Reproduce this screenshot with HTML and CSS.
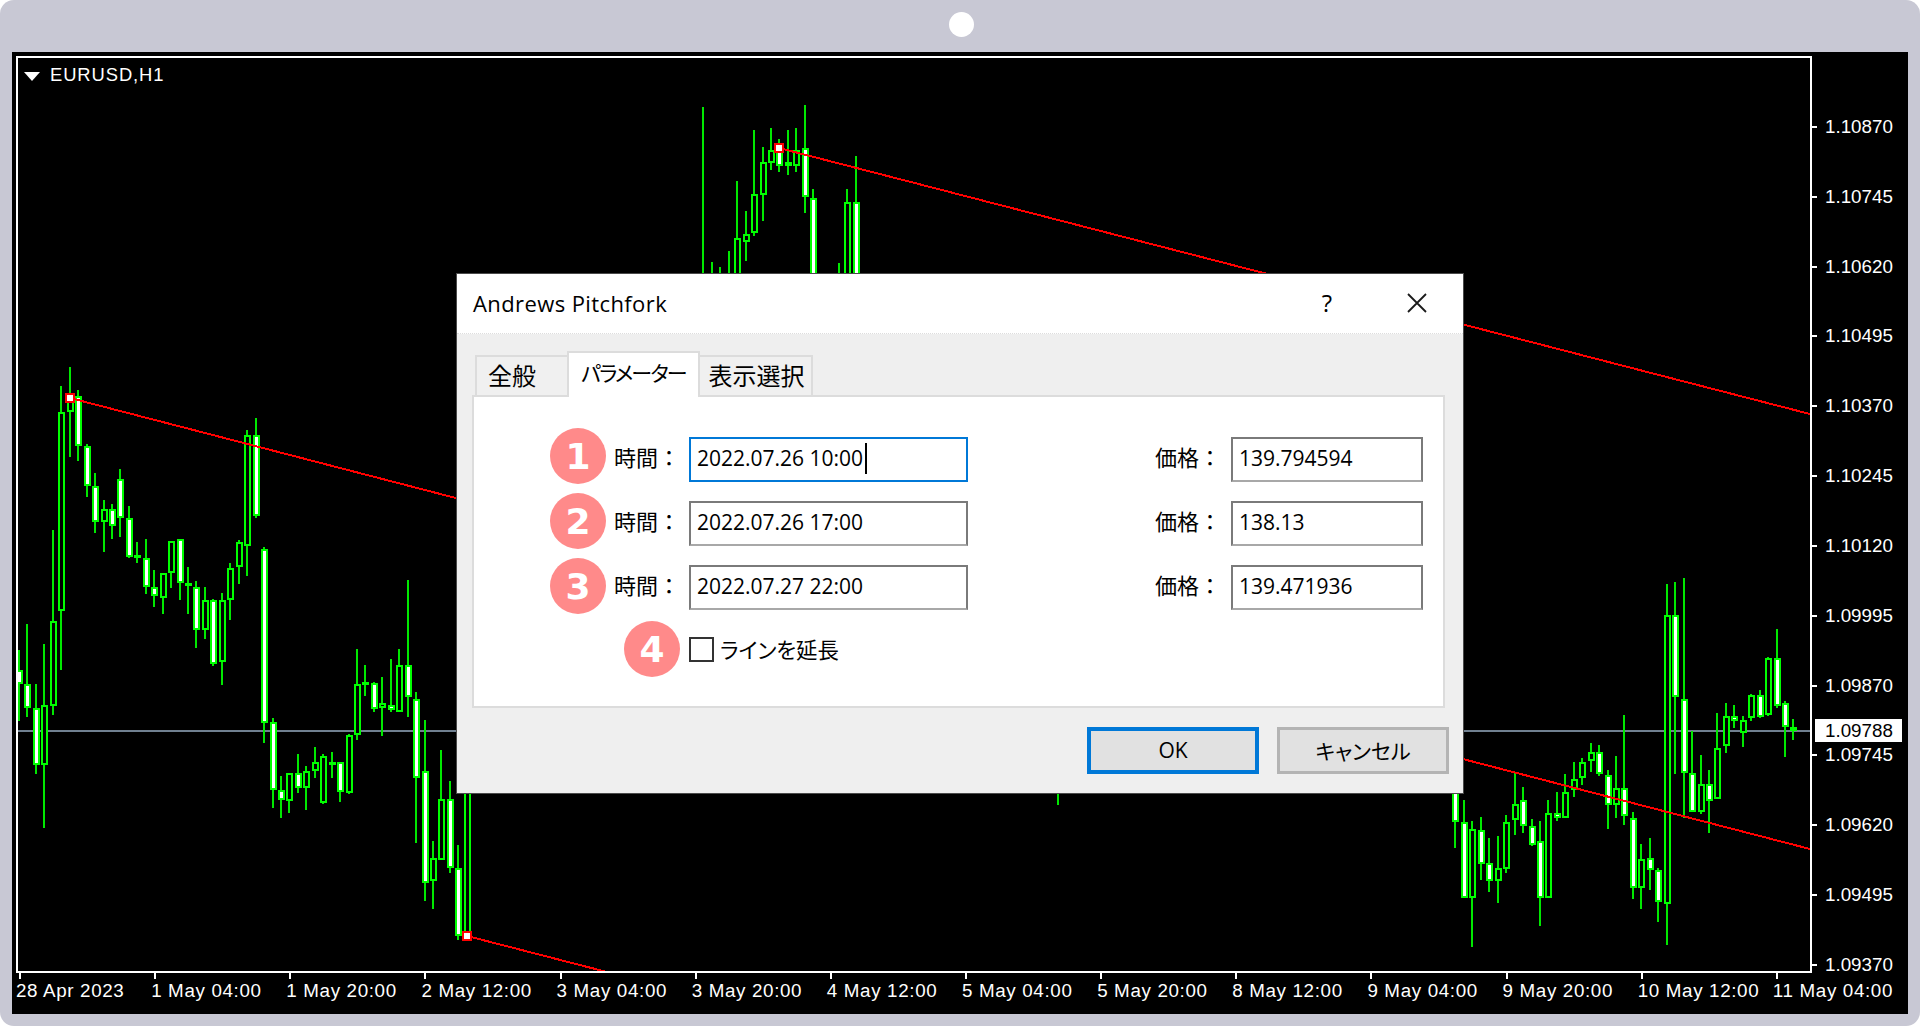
FILE: index.html
```html
<!DOCTYPE html>
<html lang="ja">

<head>
    <meta charset="UTF-8">
    <title>Andrews Pitchfork</title>
    <link rel="stylesheet" href="styles.css">
</head>

<body>
    <div class="frame">
        <div class="camera"><span class="dot"></span></div>

        <div class="terminal">
            <div class="plot">
                <svg id="chart" class="chart" viewBox="18 58 1792 913"></svg>
                <div class="symbol"><span class="arrow"></span>EURUSD,H1</div>
            </div>

            <div class="price-axis">
                <div class="price">1.10870</div>
                <div class="price">1.10745</div>
                <div class="price">1.10620</div>
                <div class="price">1.10495</div>
                <div class="price">1.10370</div>
                <div class="price">1.10245</div>
                <div class="price">1.10120</div>
                <div class="price">1.09995</div>
                <div class="price">1.09870</div>
                <div class="price">1.09745</div>
                <div class="price">1.09620</div>
                <div class="price">1.09495</div>
                <div class="price">1.09370</div>
                <div class="price-now">1.09788</div>
            </div>

            <div class="time-axis">
                <div class="time">28 Apr 2023</div>
                <div class="time">1 May 04:00</div>
                <div class="time">1 May 20:00</div>
                <div class="time">2 May 12:00</div>
                <div class="time">3 May 04:00</div>
                <div class="time">3 May 20:00</div>
                <div class="time">4 May 12:00</div>
                <div class="time">5 May 04:00</div>
                <div class="time">5 May 20:00</div>
                <div class="time">8 May 12:00</div>
                <div class="time">9 May 04:00</div>
                <div class="time">9 May 20:00</div>
                <div class="time">10 May 12:00</div>
                <div class="time">11 May 04:00</div>
            </div>

            <div class="dialog">
                <div class="titlebar">
                    <span class="title">Andrews Pitchfork</span>
                    <span class="help">?</span>
                    <svg class="close" viewBox="0 0 20 20">
                        <path d="M1 1 L19 19 M19 1 L1 19" />
                    </svg>
                </div>

                <div class="dialog-body">
                    <div class="tabs">
                        <div class="tab">全般</div>
                        <div class="tab active">パラメーター</div>
                        <div class="tab">表示選択</div>
                    </div>

                    <div class="panel">
                        <div class="row row-1">
                            <span class="badge">1</span>
                            <span class="label">時間：</span>
                            <div class="field time-field focus">2022.07.26 10:00<span class="caret"></span></div>
                            <span class="label price-label">価格：</span>
                            <div class="field price-field">139.794594</div>
                        </div>
                        <div class="row row-2">
                            <span class="badge">2</span>
                            <span class="label">時間：</span>
                            <div class="field time-field">2022.07.26 17:00</div>
                            <span class="label price-label">価格：</span>
                            <div class="field price-field">138.13</div>
                        </div>
                        <div class="row row-3">
                            <span class="badge">3</span>
                            <span class="label">時間：</span>
                            <div class="field time-field">2022.07.27 22:00</div>
                            <span class="label price-label">価格：</span>
                            <div class="field price-field">139.471936</div>
                        </div>
                        <div class="row row-check">
                            <span class="badge">4</span>
                            <span class="checkbox"></span>
                            <span class="check-label">ラインを延長</span>
                        </div>
                    </div>

                    <div class="buttons">
                        <div class="btn default">OK</div>
                        <div class="btn">キャンセル</div>
                    </div>
                </div>
            </div>
        </div>
    </div>

    <script src="chart.js"></script>
</body>

</html>
```

FILE: styles.css
```css
html,
body {
    margin: 0;
    background-color: white;
}

.frame {
    width: 1920px;
    height: 1026px;
    box-sizing: border-box;
    padding: 0 12px;
    background-color: #c8c8d4;
    border-radius: 14px;
    overflow: hidden;
}

.camera {
    height: 52px;
    display: flex;
    align-items: center;
    justify-content: center;
    padding-left: 2px;
    padding-bottom: 3px;
    box-sizing: border-box;
}

.dot {
    width: 25px;
    height: 25px;
    border-radius: 50%;
    background-color: white;
}

.terminal {
    position: relative;
    width: 1896px;
    height: 962px;
    box-sizing: border-box;
    padding: 4px 0 0 4px;
    background-color: black;
    color: white;
    font-family: "Liberation Sans", Arial, sans-serif;
    font-size: 18.8px;
    display: grid;
    grid-template-columns: 1796px 1fr;
    grid-template-rows: 917px 1fr;
    overflow: hidden;
}

.plot {
    position: relative;
    border: 2px solid white;
}

.chart {
    display: block;
    width: 1792px;
    height: 913px;
}

.symbol {
    position: absolute;
    left: 32px;
    top: 7px;
    line-height: 20px;
    font-size: 18.4px;
    letter-spacing: 0.9px;
}

.arrow {
    position: absolute;
    left: -26px;
    top: 7px;
    border-left: 8px solid transparent;
    border-right: 8px solid transparent;
    border-top: 9px solid white;
}

.price-axis {
    position: relative;
    padding-top: 36px;
}

.price {
    position: relative;
    height: 69.83px;
    display: flex;
    align-items: center;
    padding-left: 13px;
}

.price::before {
    content: "";
    position: absolute;
    left: 0;
    top: 34px;
    width: 5px;
    height: 2px;
    background-color: white;
}

.price-now {
    position: absolute;
    left: 3px;
    top: 663px;
    width: 87px;
    height: 23px;
    line-height: 23px;
    padding-left: 10px;
    box-sizing: border-box;
    background-color: white;
    color: black;
}

.time-axis {
    grid-column: 1 / 3;
    display: flex;
    padding-left: 3px;
}

.time {
    position: relative;
    flex: 0 0 135.15px;
    padding-top: 7px;
    line-height: 22px;
    white-space: nowrap;
    text-indent: -3px;
    letter-spacing: 0.65px;
}

.time::before {
    content: "";
    position: absolute;
    left: 0;
    top: 0;
    width: 2px;
    height: 6px;
    background-color: white;
}

/* dialog floats over the chart */
.dialog {
    position: absolute;
    left: 444px;
    top: 221px;
    width: 1006px;
    height: 519px;
    border: 1px solid #4a4a4a;
    background-color: #efefef;
    color: black;
    font-family: "Open Sans", "Noto Sans CJK JP", sans-serif;
    font-size: 21px;
}

.titlebar {
    height: 60px;
    box-sizing: border-box;
    padding: 0 36px 2px 16px;
    display: flex;
    align-items: center;
    background-color: white;
    border-bottom: 1px dotted #dddddd;
}

.title {
    flex: 1;
    font-size: 22px;
    letter-spacing: 0.4px;
}

.help {
    margin-right: 75px;
    font-size: 24px;
}

.close {
    width: 20px;
    height: 20px;
}

.close path {
    fill: none;
    stroke: #1a1a1a;
    stroke-width: 1.8;
}

.dialog-body {
    padding: 17px 18px 0 15px;
}

.tabs {
    display: flex;
    align-items: flex-end;
    height: 44px;
    padding-left: 3px;
    font-family: "Noto Sans CJK JP", sans-serif;
    font-size: 24px;
}

.tab {
    height: 40px;
    box-sizing: border-box;
    line-height: 36px;
    text-align: center;
    border: 2px solid #dcdcdc;
    border-bottom: none;
    background-color: #f0f0f0;
    width: 113px;
}

.tab:first-child {
    width: 92px;
    padding-right: 20px;
    border-right: none;
}

.tab.active {
    position: relative;
    height: 46px;
    width: 133px;
    margin-bottom: -2px;
    background-color: white;
    line-height: 38px;
    font-size: 21px;
    font-feature-settings: "palt";
    letter-spacing: -1.8px;
    z-index: 1;
}

.tab:last-child {
    padding-left: 2px;
    border-left: none;
}

.panel {
    width: 973px;
    height: 313px;
    box-sizing: border-box;
    padding-top: 40px;
    border: 2px solid #dcdcdc;
    background-color: white;
    display: flex;
    flex-direction: column;
    gap: 19px;
}

.row {
    position: relative;
    height: 45px;
    display: flex;
    align-items: center;
    padding-left: 140px;
}

.row-check {
    height: 42px;
    padding-left: 150px;
}

.badge {
    position: absolute;
    left: 76px;
    top: -9px;
    width: 56px;
    height: 56px;
    border-radius: 50%;
    background-color: #ff8a8a;
    color: white;
    font-family: "DejaVu Sans", sans-serif;
    font-weight: 700;
    font-size: 36px;
    line-height: 57px;
    text-align: center;
}

.row-2 .badge {
    top: -8px;
}

.row-3 .badge {
    top: -7px;
}

.row-check .badge {
    left: 150px;
    top: -8px;
}

.label {
    width: 75px;
    font-family: "Noto Sans CJK JP", sans-serif;
    font-size: 22px;
    line-height: 30px;
    margin-bottom: 7px;
}

.price-label {
    width: 76px;
    margin-left: 187px;
}

.field {
    position: relative;
    height: 45px;
    box-sizing: border-box;
    padding-left: 6px;
    line-height: 38px;
    border: 2px solid #7a7a7a;
    border-bottom-color: #a8a8a8;
    background-color: white;
    white-space: nowrap;
}

.time-field {
    width: 279px;
}

.price-field {
    width: 192px;
}

.focus {
    border-color: #0078d7;
}

.caret {
    position: absolute;
    left: 174px;
    top: 4px;
    width: 2px;
    height: 31px;
    background-color: black;
}

.checkbox {
    width: 25px;
    height: 25px;
    box-sizing: border-box;
    margin-left: 65px;
    margin-right: 6px;
    margin-bottom: 2px;
    border: 2px solid #333333;
}

.check-label {
    font-family: "Noto Sans CJK JP", sans-serif;
    font-size: 21.4px;
    line-height: 30px;
    margin-bottom: 3px;
    font-feature-settings: "palt";
}

.buttons {
    display: flex;
    justify-content: flex-end;
    gap: 18px;
    margin-top: 19px;
    margin-right: -14px;
    padding-right: 10px;
}

.btn {
    width: 172px;
    height: 47px;
    box-sizing: border-box;
    text-align: center;
    line-height: 41px;
    border: 3px solid #b4b4b4;
    background-color: #e1e1e1;
    font-family: "Noto Sans CJK JP", sans-serif;
    font-size: 21px;
    font-feature-settings: "palt";
}

.btn.default {
    border: 4px solid #0078d7;
    line-height: 39px;
    font-family: "Open Sans", sans-serif;
}
```

FILE: chart.js
```js
const svg = document.getElementById('chart');
const NS = 'http://www.w3.org/2000/svg';

// i, high, top, bottom, low, filled (1 = white body, 0 = hollow)
const candles = [
    [0, 650, 670, 684, 721, 1], [1, 624, 684, 708, 717, 1], [2, 684, 708, 765, 774, 1],
    [3, 644, 705, 765, 828, 0], [4, 530, 621, 706, 715, 0], [5, 386, 412, 611, 670, 0],
    [6, 367, 398, 412, 457, 0], [7, 390, 396, 446, 461, 1], [8, 444, 446, 486, 497, 1],
    [9, 473, 486, 522, 533, 1], [10, 500, 509, 522, 552, 0], [11, 504, 509, 526, 539, 1],
    [12, 469, 479, 518, 537, 1], [13, 506, 518, 557, 558, 1], [14, 542, 555, 558, 563, 1],
    [15, 539, 558, 587, 594, 1], [16, 570, 587, 596, 607, 1], [17, 573, 573, 598, 614, 0],
    [18, 541, 541, 573, 588, 0], [19, 539, 539, 583, 600, 1], [20, 567, 583, 585, 614, 1],
    [21, 581, 587, 630, 648, 1], [22, 587, 600, 630, 639, 0], [23, 599, 600, 664, 666, 1],
    [24, 593, 600, 662, 685, 0], [25, 563, 568, 600, 620, 0], [26, 540, 542, 567, 584, 0],
    [27, 430, 435, 546, 576, 0], [28, 418, 435, 516, 518, 1], [29, 547, 549, 723, 743, 1],
    [30, 718, 722, 790, 808, 1], [31, 776, 790, 800, 818, 1], [32, 773, 773, 801, 813, 0],
    [33, 754, 773, 788, 793, 1], [34, 766, 771, 788, 810, 0], [35, 747, 762, 771, 778, 0],
    [36, 754, 756, 803, 804, 0], [37, 752, 762, 764, 778, 1], [38, 762, 762, 792, 802, 1],
    [39, 734, 735, 793, 794, 0], [40, 649, 684, 735, 740, 0], [41, 665, 682, 684, 696, 1],
    [42, 682, 683, 709, 712, 1], [43, 677, 703, 708, 736, 0], [44, 659, 705, 710, 712, 1],
    [45, 649, 665, 712, 712, 0], [46, 580, 665, 697, 717, 1], [47, 692, 699, 778, 843, 1],
    [48, 720, 771, 883, 901, 1], [49, 841, 858, 881, 909, 0], [50, 750, 799, 860, 860, 0],
    [51, 781, 799, 868, 873, 1], [52, 845, 868, 936, 940, 1], [53, 700, 720, 934, 938, 0],

    // top of the chart, the rest is behind the dialog
    [81, 107, 300, 300, 300, 0], [82, 262, 300, 300, 300, 0], [83, 267, 300, 300, 300, 0],
    [84, 251, 300, 300, 300, 0], [85, 181, 238, 300, 300, 0], [86, 211, 234, 242, 261, 0],
    [87, 130, 194, 233, 236, 0], [88, 147, 162, 195, 221, 0], [89, 128, 150, 163, 170, 0],
    [90, 139, 148, 166, 172, 1], [91, 130, 162, 166, 175, 1], [92, 128, 150, 166, 172, 0],
    [93, 105, 148, 197, 213, 1], [94, 189, 198, 300, 300, 1], [97, 263, 300, 300, 300, 0],
    [98, 189, 202, 300, 300, 0], [99, 156, 202, 300, 300, 1], [123, 760, 780, 780, 805, 0],

    [170, 700, 740, 822, 848, 1], [171, 800, 822, 898, 898, 1], [172, 821, 829, 898, 947, 0],
    [173, 817, 830, 864, 880, 1], [174, 838, 863, 881, 892, 1], [175, 836, 868, 881, 903, 0],
    [176, 815, 822, 869, 873, 0], [177, 772, 804, 820, 835, 0], [178, 787, 800, 826, 833, 1],
    [179, 819, 826, 845, 846, 1], [180, 821, 841, 898, 926, 1], [181, 800, 813, 898, 898, 0],
    [182, 792, 813, 818, 821, 1], [183, 774, 792, 818, 818, 0], [184, 762, 779, 790, 797, 0],
    [185, 758, 762, 778, 785, 0], [186, 743, 752, 761, 772, 0], [187, 745, 752, 774, 776, 1],
    [188, 770, 775, 805, 829, 1], [189, 756, 788, 805, 818, 0], [190, 715, 788, 816, 825, 1],
    [191, 812, 818, 888, 899, 1], [192, 844, 859, 888, 909, 0], [193, 838, 858, 870, 890, 1],
    [194, 868, 870, 902, 922, 1], [195, 584, 615, 904, 945, 0], [196, 582, 615, 697, 774, 1],
    [197, 578, 699, 773, 818, 1], [198, 731, 773, 812, 812, 1], [199, 755, 784, 812, 814, 0],
    [200, 770, 784, 801, 833, 1], [201, 713, 748, 799, 799, 0], [202, 703, 716, 746, 753, 0],
    [203, 705, 716, 721, 728, 1], [204, 716, 720, 733, 747, 0], [205, 694, 695, 718, 721, 0],
    [206, 690, 695, 717, 718, 1], [207, 657, 658, 715, 716, 0], [208, 629, 658, 706, 708, 1],
    [209, 701, 703, 727, 757, 1], [210, 719, 727, 731, 740, 1]
];

function add(name, attrs) {
    const el = document.createElementNS(NS, name);
    for (const key in attrs) {
        el.setAttribute(key, attrs[key]);
    }
    svg.appendChild(el);
    return el;
}

function rect(x, y, w, h, fill) {
    return add('rect', { x: x, y: y, width: w, height: h, fill: fill, 'shape-rendering': 'crispEdges' });
}

function line(x1, y1, x2, y2, color, width) {
    add('line', { x1: x1, y1: y1, x2: x2, y2: y2, stroke: color, 'stroke-width': width, 'shape-rendering': 'crispEdges' });
}

// current price
line(18, 731, 1810, 731, '#708090', 2);

candles.forEach(function (c) {
    const x = Math.round(19 + 8.45 * c[0]) - 1;
    rect(x, c[1], 2, c[4] - c[1], '#00e800');
    rect(x - 2, c[2], 7, Math.max(c[3] - c[2], 3), '#00ff00');
    if (c[3] - c[2] > 3) {
        rect(x, c[2] + 2, 3, c[3] - c[2] - 4, c[5] ? 'white' : 'black');
    }
});

// pitchfork lines
line(70, 398, 1810, 849, '#ff0000', 2);
line(779, 148, 1810, 414, '#ff0000', 2);
line(467, 936, 607, 972, '#ff0000', 2);

// anchor points
[[70, 398], [779, 148], [467, 936]].forEach(function (p) {
    rect(p[0] - 5, p[1] - 5, 10, 10, '#ff0000');
    rect(p[0] - 3, p[1] - 3, 6, 6, 'white');
});
```
